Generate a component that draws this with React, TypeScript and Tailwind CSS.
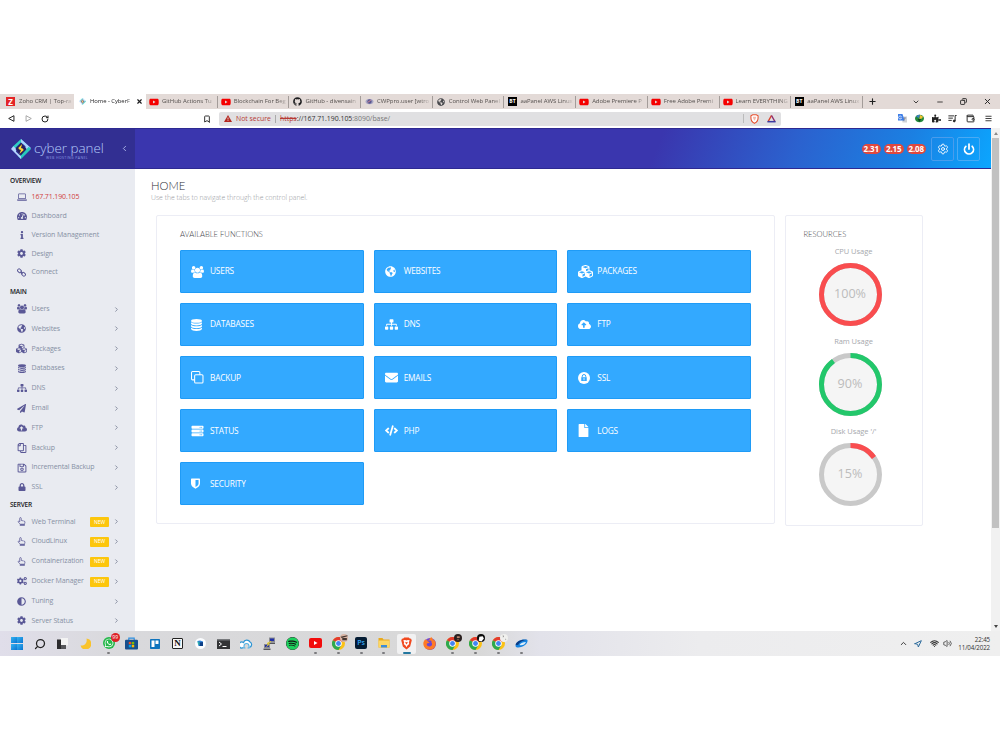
import type { ReactNode } from 'react';
import type { IconType } from 'react-icons';
import {
  FaAdjust,
  FaBars,
  FaCloudUploadAlt,
  FaCode,
  FaCog,
  FaCogs,
  FaCubes,
  FaEnvelope,
  FaFile,
  FaFirefoxBrowser,
  FaGithub,
  FaGlobeAmericas,
  FaInfo,
  FaLock,
  FaPaperPlane,
  FaPuzzlePiece,
  FaRegCopy,
  FaRegSave,
  FaServer,
  FaSitemap,
  FaSpotify,
  FaTachometerAlt,
  FaWhatsapp,
  FaYoutube,
} from 'react-icons/fa';
import {
  Bookmark,
  ChevronDown,
  ChevronLeft,
  ChevronRight,
  ChevronUp,
  Copy,
  Minus,
  Navigation,
  Plus,
  Power,
  RotateCw,
  Search,
  Settings,
  Volume2,
  Wallet,
  Wifi,
  X,
} from 'lucide-react';

type IconProps = { className?: string };

function UsersIcon({ className }: IconProps) {
  return (
    <svg viewBox="0 0 1920 1792" fill="currentColor" className={className}>
      <path d="M593 896q-162 5-265 128h-134q-82 0-138-40.5t-56-118.5q0-353 124-353 6 0 43.5 21t97.5 42.5 119 21.5q67 0 133-23-5 37-5 66 0 139 81 256zm1071 637q0 120-73 189.5t-194 69.5h-874q-121 0-194-69.5t-73-189.5q0-53 3.5-103.5t14-109 26.5-108.5 43-97.5 62-81 85.5-53.5 111.5-20q10 0 43 21.5t73 48 107 48 135 21.5 135-21.5 107-48 73-48 43-21.5q61 0 111.5 20t85.5 53.5 62 81 43 97.5 26.5 108.5 14 109 3.5 103.5zm-1024-1277q0 106-75 181t-181 75-181-75-75-181 75-181 181-75 181 75 75 181zm704 384q0 159-112.5 271.5t-271.5 112.5-271.5-112.5-112.5-271.5 112.5-271.5 271.5-112.5 271.5 112.5 112.5 271.5zm576 225q0 78-56 118.5t-138 40.5h-134q-103-123-265-128 81-117 81-256 0-29-5-66 66 23 133 23 59 0 119-21.5t97.5-42.5 43.5-21q124 0 124 353zm-128-609q0 106-75 181t-181 75-181-75-75-181 75-181 181-75 181 75 75 181z" />
    </svg>
  );
}

function LaptopIcon({ className }: IconProps) {
  return (
    <svg viewBox="0 0 20 16" fill="currentColor" className={className}>
      <path d="M4 1h12a1.5 1.5 0 0 1 1.5 1.5V12h-15V2.5A1.5 1.5 0 0 1 4 1zm0 1.5v8h12v-8z" fillRule="evenodd" />
      <path d="M0 13h20v1.5l-1.5 1H1.5L0 14.5z" />
    </svg>
  );
}

function ChainIcon({ className }: IconProps) {
  return (
    <svg viewBox="0 0 20 20" fill="none" stroke="currentColor" strokeWidth="2.2" className={className}>
      <rect x="1" y="3" width="9" height="6.5" rx="2.8" transform="rotate(45 5.5 6.25)" />
      <rect x="10" y="10.5" width="9" height="6.5" rx="2.8" transform="rotate(45 14.5 13.75)" />
      <path d="M8 8l4.5 4.5" />
    </svg>
  );
}

function DatabaseIcon({ className }: IconProps) {
  return (
    <svg viewBox="0 0 20 22" fill="currentColor" className={className}>
      <ellipse cx="10" cy="3.5" rx="10" ry="3.5" />
      <path d="M0 6c3 3 17 3 20 0v2.8c-1 4-19 4-20 0z" />
      <path d="M0 11c3 3 17 3 20 0v2.8c-1 4-19 4-20 0z" />
      <path d="M0 16c3 3 17 3 20 0v2.5c-1 4.5-19 4.5-20 0z" />
    </svg>
  );
}

function HandIcon({ className }: IconProps) {
  return (
    <svg viewBox="0 0 18 20" fill="none" stroke="currentColor" strokeWidth="1.7" strokeLinejoin="round" className={className}>
      <path d="M5 11V3a1.7 1.7 0 0 1 3.4 0v5c1-1 2.6-.6 3 .6 1-.8 2.3-.3 2.7.8 1.3-.5 2.6.2 2.6 1.8 0 3-1.2 3.8-1.2 5H6.500C5.500 14 1.500 12.500 1.500 10.500 1.500 9 3.500 8.500 5 11z" />
      <path d="M6 16.500h9.500V19H6z" />
    </svg>
  );
}

function CloneIcon({ className }: IconProps) {
  return (
    <svg viewBox="0 0 24 24" fill="none" stroke="currentColor" strokeWidth="2" className={className}>
      <rect x="7" y="7" width="16" height="16" rx="2" />
      <path d="M7 17H3a2 2 0 0 1-2-2V3a2 2 0 0 1 2-2h12a2 2 0 0 1 2 2v4" />
    </svg>
  );
}

function ShieldIcon({ className }: IconProps) {
  return (
    <svg viewBox="0 0 20 24" fill="currentColor" className={className}>
      <path
        d="M1.500 1h17A1.500 1.500 0 0 1 20 2.500V12c0 5-4 8.500-10 11.500C4 20.500 0 17 0 12V2.500A1.500 1.500 0 0 1 1.500 1zM10 4v16c4-2.200 6.800-4.800 6.800-8V4z"
        fillRule="evenodd"
      />
    </svg>
  );
}

function LockCircleIcon({ className }: IconProps) {
  return (
    <svg viewBox="0 0 24 24" className={className}>
      <circle cx="12" cy="12" r="12" fill="currentColor" />
      <path d="M8.500 11V8.500a3.500 3.500 0 0 1 7 0V11" fill="none" stroke="#33a9ff" strokeWidth="2" />
      <path d="M6.500 10.500h11v7.500h-11z" fill="#33a9ff" />
      <path d="M12 12v4.500" stroke="currentColor" strokeWidth="1.6" />
    </svg>
  );
}

function LogoMark({ className }: IconProps) {
  return (
    <svg viewBox="0 0 36 36" className={className}>
      <path d="M18 0 27 9 22 9 18 6 7 17 3 14z" fill="#2fd0c4" />
      <path d="M18 0 36 16 30 22 26 18 26 13 18 6z" fill="#a9d4ff" />
      <path d="M36 18 18 36 12 30 17 30 29 17 32 14z" fill="#27c9bb" />
      <path d="M0 18 4 13 10 18 9 23 18 31 18 36z" fill="#b4d6ff" />
      <path d="M18 7 28 18 18 29 8 18z" fill="#24215f" />
      <path d="M20 9 13 16 15 19 18 20 15 27 23 20 21 17 18 16z" fill="#ffd332" />
    </svg>
  );
}

function ChromeIcon({ className }: IconProps) {
  return (
    <svg viewBox="0 0 24 24" className={className}>
      <circle cx="12" cy="12" r="12" fill="#fbc116" />
      <path d="M12 12 1.6 6A12 12 0 0 1 22.4 6z" fill="#e33b2e" />
      <path d="M1.6 6A12 12 0 0 0 12 24l5.2-9L12 12z" fill="#2da94f" />
      <circle cx="12" cy="12" r="6" fill="#fff" />
      <circle cx="12" cy="12" r="4.5" fill="#4285f4" />
    </svg>
  );
}

function BraveIcon({ className }: IconProps) {
  return (
    <svg viewBox="0 0 24 28" className={className}>
      <path d="M7 1h10l2 2 3 .5 1.500 4-1 3-2.500 10L12 27l-8-6.500L1.500 10.500.500 7.500l1.500-4L5 3z" fill="#f1491f" />
      <path d="M5 7l4-.5 3 1 3-1 4 .5-2 5 1 3-4 3.500-2 3.500-2-3.500L6 15l1-3z" fill="#fff" />
      <path d="M9 10l3 1.500 3-1.500-1.500 4L12 16l-1.500-2z" fill="#f1491f" />
    </svg>
  );
}

type Tab = { title: string; icon: ReactNode };

const btIcon = (
  <span className="flex h-[9px] w-[9px] items-center justify-center bg-black text-[5px] font-bold text-white">BT</span>
);
const ytIcon = <FaYoutube className="h-[10px] w-[10px] text-[#f50000]" />;

const tabs: Tab[] = [
  { title: 'GitHub Actions Tu', icon: ytIcon },
  { title: 'Blockchain For Beg', icon: ytIcon },
  { title: 'GitHub - divensain', icon: <FaGithub className="h-[9px] w-[9px] text-[#1d1d1f]" /> },
  {
    title: 'CWPpro.user [wtro',
    icon: (
      <svg viewBox="0 0 20 16" className="h-[7px] w-[9px]">
        <ellipse cx="10" cy="8" rx="9" ry="6" fill="#a8a6c4" />
        <circle cx="10" cy="8" r="5" fill="#5a568f" />
        <path d="M6 10l7-5" stroke="#d98a9a" strokeWidth="2" />
      </svg>
    ),
  },
  { title: 'Control Web Panel', icon: <FaGlobeAmericas className="h-[8px] w-[8px] text-[#48494d]" /> },
  { title: 'aaPanel AWS Linux', icon: btIcon },
  { title: 'Adobe Premiere P', icon: ytIcon },
  { title: 'Free Adobe Premi', icon: ytIcon },
  { title: 'Learn EVERYTHING', icon: ytIcon },
  { title: 'aaPanel AWS Linux', icon: btIcon },
];

function TabStrip() {
  return (
    <div className="flex h-[15px] items-center bg-[#e3dad7] text-[6px] tracking-[-0.05px] text-[#55504e]">
      <div className="flex h-full w-[74px] shrink-0 items-center gap-[4px] pl-[6px]">
        <span className="flex h-[9px] w-[9px] shrink-0 items-center justify-center bg-[#e42527] text-[8px] leading-none font-bold text-white">Z</span>
        <span className="w-[54px] whitespace-nowrap mask-r-from-80%">Zoho CRM | Top-ra</span>
      </div>
      <div className="flex h-full w-[72px] shrink-0 items-center bg-white pl-[5px] text-[#1d1d1f]">
        <LogoMark className="h-[7px] w-[7px] opacity-70" />
        <span className="ml-[4px] w-[43px] text-[5.9px] font-medium whitespace-nowrap mask-r-from-85%">Home - CyberF</span>
        <X className="ml-[3px] h-[7px] w-[7px]" strokeWidth={4} />
      </div>
      {tabs.map((tab, i) => (
        <div key={i} className="flex h-full w-[71.7px] shrink-0 items-center">
          <span className="flex w-[16px] shrink-0 justify-center">{tab.icon}</span>
          <span className="w-[54px] whitespace-nowrap mask-r-from-80%">{tab.title}</span>
          <span className="ml-auto h-[12px] w-px bg-[#a39c99]" />
        </div>
      ))}
      <Plus className="ml-[5px] h-[9px] w-[9px] shrink-0 text-[#222]" strokeWidth={3} />
      <div className="ml-auto flex items-center pr-[8px] text-[#222]">
        <ChevronDown className="h-[8px] w-[8px]" strokeWidth={2.5} />
        <Minus className="ml-[16px] h-[8px] w-[8px]" strokeWidth={2.5} />
        <Copy className="ml-[16px] h-[7px] w-[7px] -scale-x-100" strokeWidth={3} />
        <X className="ml-[16px] h-[9px] w-[9px]" strokeWidth={2.5} />
      </div>
    </div>
  );
}

function AddressBar() {
  return (
    <div className="flex h-[19px] items-center bg-white text-[#333]">
      <svg viewBox="0 0 10 10" className="ml-[8px] h-[7px] w-[7px]">
        <path d="M8.500 1v8L1 5z" fill="none" stroke="#222" strokeWidth="1.4" strokeLinejoin="round" />
      </svg>
      <svg viewBox="0 0 10 10" className="ml-[10px] h-[7px] w-[7px]">
        <path d="M1.500 1v8L9 5z" fill="none" stroke="#999" strokeWidth="1.2" strokeLinejoin="round" />
      </svg>
      <RotateCw className="ml-[9px] h-[8px] w-[8px] text-[#222]" strokeWidth={3} />
      <Bookmark className="ml-[154px] h-[8px] w-[8px]" strokeWidth={3} />
      <div className="ml-[8px] flex h-[14px] w-[562px] items-center rounded-[2px] bg-[#e0e0e2] pl-[5px] text-[6.9px]">
        <svg viewBox="0 0 16 14" className="h-[7px] w-[8px]">
          <path d="M8 0l8 14H0z" fill="#b3261e" />
          <path d="M8 5v4M8 10.500v1.500" stroke="#fff" strokeWidth="1.5" />
        </svg>
        <span className="mt-[1px] ml-[4px] w-[36px] whitespace-nowrap text-[#b73a35]">Not secure</span>
        <span className="ml-[3px] h-[8px] w-px bg-[#aaa]" />
        <span className="mt-[1px] ml-[4px] whitespace-nowrap">
          <span className="text-[#b73a35] line-through">https</span>://167.71.190.105<span className="text-[#777]">:8090/base/</span>
        </span>
        <span className="ml-auto h-[9px] w-px bg-[#bbb]" />
        <svg viewBox="0 0 24 28" className="ml-[6px] h-[10px] w-[9px]">
          <path d="M7 2h10l5 3v6c0 7-4 12-10 15C6 23 2 18 2 11V5z" fill="#fff" stroke="#e8502f" strokeWidth="3" />
          <path d="M7 8h10l-2 6-3 5-3-5z" fill="#f3b9ac" />
        </svg>
        <svg viewBox="0 0 24 22" className="mr-[5px] ml-[8px] h-[9px] w-[9px]">
          <path d="M12 3 3 19" stroke="#d8402a" strokeWidth="4" />
          <path d="M12 3l9 16" stroke="#8e2c6c" strokeWidth="4" />
          <path d="M1 19.500h22" stroke="#3b3aa0" strokeWidth="4" />
        </svg>
      </div>
      <div className="ml-auto flex items-center pr-[8px] text-[#222]">
        <svg viewBox="0 0 18 18" className="h-[9px] w-[9px]">
          <path d="M7 5h11v12H9z" fill="#cfd2d6" />
          <path d="M0 0h9l4 13H0z" fill="#3f7fe8" />
          <path d="M7 6a3 3 0 1 0 0 2H5" stroke="#fff" strokeWidth="1.4" fill="none" />
          <path d="M11 8h5M13.500 7v1c0 3-2 5-3 6" stroke="#667" strokeWidth="1" fill="none" />
        </svg>
        <svg viewBox="0 0 18 18" className="ml-[8px] h-[9px] w-[9px]">
          <ellipse cx="9" cy="9" rx="9" ry="7.5" fill="#23883c" />
          <path d="M2 5a8 8 0 0 1 8-3.500L8 8z" fill="#3c7fc4" />
          <path d="M10 2l6 3-2 4-5 1z" fill="#f1c232" />
          <path d="M5 10h7l-3 6z" fill="#0b4a1f" />
        </svg>
        <FaPuzzlePiece className="ml-[8px] h-[9px] w-[9px]" />
        <svg viewBox="0 0 24 24" fill="none" stroke="currentColor" strokeWidth="2.5" className="ml-[7px] h-[9px] w-[9px]">
          <path d="M1 5h15M1 11h12M1 17h9M19 19V4h4" />
          <circle cx="16.500" cy="18.500" r="2.5" fill="currentColor" />
        </svg>
        <Wallet className="ml-[9px] h-[9px] w-[9px]" strokeWidth={2.5} />
        <FaBars className="ml-[10px] h-[7px] w-[7px] text-[#444]" />
      </div>
    </div>
  );
}

function Header() {
  return (
    <header className="flex h-[41px] items-center border-t border-b border-[#2d2992] bg-[linear-gradient(112deg,#3a36ae_0%,#3a36ae_66%,#2b62cf_80%,#1b80e2_91%,#0ba6ff_100%)]">
      <div className="flex h-full w-[135px] shrink-0 items-center bg-[#322f92]">
        <LogoMark className="ml-[11px] h-[20px] w-[20px]" />
        <div className="ml-[3px] flex w-[70px] flex-col pt-[4px]">
          <span className="text-[13.4px] leading-[14px] font-light whitespace-nowrap text-[#b5cdfb]">cyber panel</span>
          <span className="mt-[1.5px] ml-[12px] text-[3.5px] leading-[4px] tracking-[0.4px] whitespace-nowrap text-[#8d9be0]">WEB HOSTING PANEL</span>
        </div>
        <ChevronLeft className="ml-[15.5px] h-[9px] w-[9px] text-[#c5d0f8]" />
      </div>
      <div className="ml-auto flex items-center pr-[11px]">
        {['2.31', '2.15', '2.08'].map((load) => (
          <span
            key={load}
            className="mr-[3px] flex h-[10px] w-[19.5px] items-center justify-center rounded-full bg-[#e0483e] text-[8px] leading-none font-bold tracking-[-0.1px] text-white"
          >
            {load}
          </span>
        ))}
        <button className="ml-[2px] flex h-[24px] w-[23px] items-center justify-center rounded-[2px] border border-[#4a9cec] text-white">
          <Settings className="h-[12px] w-[12px]" strokeWidth={1.8} />
        </button>
        <button className="ml-[3px] flex h-[24px] w-[23px] items-center justify-center rounded-[2px] border border-[#4aaaf4] text-white">
          <Power className="h-[12px] w-[12px]" strokeWidth={3.5} />
        </button>
      </div>
    </header>
  );
}

type NavItem = { label: string; icon: IconType | typeof UsersIcon; size?: string; isNew?: boolean; active?: boolean };

const overview: NavItem[] = [
  { label: '167.71.190.105', icon: LaptopIcon, size: 'h-[8px] w-[10px]', active: true },
  { label: 'Dashboard', icon: FaTachometerAlt, size: 'h-[10px] w-[10px]' },
  { label: 'Version Management', icon: FaInfo, size: 'h-[8px] w-[8px]' },
  { label: 'Design', icon: FaCog },
  { label: 'Connect', icon: ChainIcon },
];

const mainItems: NavItem[] = [
  { label: 'Users', icon: UsersIcon, size: 'h-[9.5px] w-[10px]' },
  { label: 'Websites', icon: FaGlobeAmericas },
  { label: 'Packages', icon: FaCubes, size: 'h-[11px] w-[11px]' },
  { label: 'Databases', icon: DatabaseIcon, size: 'h-[9.5px] w-[8px]' },
  { label: 'DNS', icon: FaSitemap, size: 'h-[10px] w-[10px]' },
  { label: 'Email', icon: FaPaperPlane },
  { label: 'FTP', icon: FaCloudUploadAlt, size: 'h-[10px] w-[10px]' },
  { label: 'Backup', icon: FaRegCopy, size: 'h-[10px] w-[10px] -scale-x-100' },
  { label: 'Incremental Backup', icon: FaRegSave, size: 'h-[10px] w-[10px]' },
  { label: 'SSL', icon: FaLock, size: 'h-[8px] w-[8px]' },
];

const serverItems: NavItem[] = [
  { label: 'Web Terminal', icon: HandIcon, isNew: true },
  { label: 'CloudLinux', icon: HandIcon, isNew: true },
  { label: 'Containerization', icon: HandIcon, isNew: true },
  { label: 'Docker Manager', icon: FaCogs, size: 'h-[10px] w-[10px]', isNew: true },
  { label: 'Tuning', icon: FaAdjust },
  { label: 'Server Status', icon: FaCog },
];

function NavRow({ item, expandable }: { item: NavItem; expandable?: boolean }) {
  const Icon = item.icon;
  return (
    <li className={expandable ? 'flex h-[19.8px] items-center' : 'flex h-[18.8px] items-center'}>
      <span className="ml-[14px] flex w-[15px] shrink-0 justify-center text-[#5a5896]">
        <Icon className={item.size ?? 'h-[9px] w-[9px]'} />
      </span>
      <span
        className={
          item.active
            ? 'ml-[2.5px] w-[58px] text-[7px] tracking-[-0.12px] whitespace-nowrap text-[#d03c3c]'
            : 'ml-[2.5px] w-[58px] text-[7px] tracking-[-0.12px] whitespace-nowrap text-[#8690a4]'
        }
      >
        {item.label}
      </span>
      <span className="flex w-[20px] justify-center">
        {item.isNew && (
          <span className="mt-[1px] flex h-[10px] w-[19px] items-center justify-center rounded-[1px] bg-[#fcc60d] text-[5px] font-medium text-white">
            NEW
          </span>
        )}
      </span>
      {expandable && <ChevronRight className="ml-[3.5px] h-[7px] w-[7px] text-[#6a7288]" strokeWidth={2.5} />}
    </li>
  );
}

function Sidebar() {
  return (
    <aside className="h-full w-[135px] shrink-0 overflow-hidden bg-[#e9ebf1] text-[6.5px]">
      <h6 className="pt-[5.5px] pb-[1.5px] pl-[10px] leading-[12px] font-semibold tracking-[-0.2px] text-[#16161a]">OVERVIEW</h6>
      <ul>
        {overview.map((item) => (
          <NavRow key={item.label} item={item} />
        ))}
      </ul>
      <h6 className="h-[17.3px] pl-[10px] leading-[20px] font-semibold tracking-[-0.2px] text-[#16161a]">MAIN</h6>
      <ul>
        {mainItems.map((item) => (
          <NavRow key={item.label} item={item} expandable />
        ))}
      </ul>
      <h6 className="h-[14.8px] pl-[10px] leading-[16px] font-semibold tracking-[-0.2px] text-[#16161a]">SERVER</h6>
      <ul>
        {serverItems.map((item) => (
          <NavRow key={item.label} item={item} expandable />
        ))}
      </ul>
    </aside>
  );
}

const functions = [
  { label: 'USERS', icon: UsersIcon, size: 'h-[12px] w-[13px]' },
  { label: 'WEBSITES', icon: FaGlobeAmericas, size: 'h-[11px] w-[11px]' },
  { label: 'PACKAGES', icon: FaCubes, size: 'h-[15px] w-[15px]' },
  { label: 'DATABASES', icon: DatabaseIcon, size: 'h-[12px] w-[11px]' },
  { label: 'DNS', icon: FaSitemap, size: 'h-[13px] w-[13px]' },
  { label: 'FTP', icon: FaCloudUploadAlt, size: 'h-[13px] w-[13px]' },
  { label: 'BACKUP', icon: CloneIcon, size: 'h-[12.5px] w-[12.5px]' },
  { label: 'EMAILS', icon: FaEnvelope, size: 'h-[13px] w-[13px]' },
  { label: 'SSL', icon: LockCircleIcon, size: 'h-[12px] w-[12px]' },
  { label: 'STATUS', icon: FaServer, size: 'h-[12px] w-[13px]' },
  { label: 'PHP', icon: FaCode, size: 'h-[13px] w-[13px]' },
  { label: 'LOGS', icon: FaFile, size: 'h-[13px] w-[11px]' },
  { label: 'SECURITY', icon: ShieldIcon, size: 'h-[11px] w-[9px]' },
];

function FunctionsPanel() {
  return (
    <section className="h-[309px] w-[618.5px] shrink-0 rounded-[2px] border border-[#ecedf5] bg-white pt-[13px] pl-[23px]">
      <h3 className="font-['Lato'] text-[7.6px] leading-[11px] font-light text-[#44454b]">AVAILABLE FUNCTIONS</h3>
      <div className="mt-[10px] grid w-[571px] grid-cols-3 gap-[10px]">
        {functions.map(({ label, icon: Icon, size }) => (
          <a
            key={label}
            className="flex h-[43.1px] items-center rounded-[1px] border border-[#1f9bf6] bg-[#33a9ff] pl-[10px] text-white"
          >
            <span className="flex w-[15px] shrink-0">
              <Icon className={size} />
            </span>
            <span className="ml-[4px] text-[8.3px] font-medium tracking-[-0.18px]">{label}</span>
          </a>
        ))}
      </div>
    </section>
  );
}

const resources = [
  { label: 'CPU Usage', value: 100, color: '#f94d4f' },
  { label: 'Ram Usage', value: 90, color: '#23c76b' },
  { label: "Disk Usage '/'", value: 15, color: '#f94d4f' },
];

function UsageRing({ value, color }: { value: number; color: string }) {
  return (
    <div className="grid h-[63px] w-[63px] place-items-center">
      <svg viewBox="0 0 63 63" className="col-start-1 row-start-1 h-[63px] w-[63px] -rotate-90">
        <circle cx="31.5" cy="31.5" r="29" fill="#f5f5f5" stroke="#c9c9c9" strokeWidth="5" />
        <circle
          cx="31.5"
          cy="31.5"
          r="29"
          fill="none"
          stroke={color}
          strokeWidth="5"
          pathLength={100}
          strokeDasharray={`${value} ${100 - value}`}
        />
      </svg>
      <span className="z-10 col-start-1 row-start-1 text-[12.6px] leading-none text-[#bcbcbc]">{value}%</span>
    </div>
  );
}

function ResourcesPanel() {
  return (
    <section className="h-[311px] w-[138px] shrink-0 rounded-[2px] border border-[#ecedf5] bg-white pt-[13px]">
      <h3 className="pl-[18px] font-['Lato'] text-[7.6px] leading-[11px] font-light text-[#44454b]">RESOURCES</h3>
      {resources.map((r) => (
        <div key={r.label} className="flex h-[89.8px] w-[129px] flex-col items-center">
          <span className="mt-[5px] ml-[7px] text-[7.5px] leading-[13px] tracking-[-0.05px] text-[#a6a8ad]">{r.label}</span>
          <div className="mt-[5px]">
            <UsageRing value={r.value} color={r.color} />
          </div>
        </div>
      ))}
    </section>
  );
}

type TaskItem = { icon: ReactNode; running?: boolean; active?: boolean };

function ChromeProfile({ avatar }: { avatar: ReactNode }) {
  return (
    <span className="relative flex">
      <ChromeIcon className="h-[13px] w-[13px]" />
      <span className="absolute -top-[3px] -right-[3px]">{avatar}</span>
    </span>
  );
}

const taskItems: TaskItem[] = [
  {
    icon: (
      <span className="grid grid-cols-2 gap-[0.5px]">
        {[0, 1, 2, 3].map((n) => (
          <span key={n} className="h-[6px] w-[6px] bg-[linear-gradient(135deg,#35b3f1,#0b74d1)]" />
        ))}
      </span>
    ),
  },
  { icon: <Search className="h-[12px] w-[12px] -scale-x-100 text-[#222]" strokeWidth={2.5} /> },
  {
    icon: (
      <svg viewBox="0 0 22 22" className="h-[11px] w-[11px]">
        <path d="M7 0h15v15H7z" fill="#f3f3f3" />
        <path d="M0 3h8v11h10v8H0z" fill="#2c2c2e" />
        <path d="M8 14h10v8H8z" fill="#56565a" />
      </svg>
    ),
  },
  {
    icon: (
      <svg viewBox="0 0 22 22" className="h-[11px] w-[11px]">
        <path d="M13 1A11 11 0 1 1 1 15C9 16 15 10 13 1z" fill="#f9c32c" />
      </svg>
    ),
  },
  {
    icon: (
      <span className="relative flex h-[12px] w-[12px] items-center justify-center rounded-full bg-[#25b84a]">
        <FaWhatsapp className="h-[10px] w-[10px] text-white" />
        <span className="absolute -top-[4px] -right-[5px] flex h-[9px] w-[9px] items-center justify-center rounded-full bg-[#dd2025] text-[5px] text-white">
          99
        </span>
      </span>
    ),
    running: true,
  },
  {
    icon: (
      <svg viewBox="0 0 24 24" className="h-[13px] w-[13px]">
        <path d="M7 6V2h10v4" fill="none" stroke="#2a8de0" strokeWidth="2" />
        <rect y="5" width="24" height="18" rx="2" fill="#174f8c" />
        <path d="M7 9h4.500v4.500H7z" fill="#f25022" />
        <path d="M12.500 9H17v4.500h-4.500z" fill="#7fba00" />
        <path d="M7 14.500h4.500V19H7z" fill="#00a4ef" />
        <path d="M12.500 14.500H17V19h-4.500z" fill="#ffb900" />
      </svg>
    ),
  },
  {
    icon: (
      <svg viewBox="0 0 20 20" className="h-[10px] w-[10px]">
        <rect width="20" height="20" rx="1.5" fill="#0f74bd" />
        <path d="M3 3h6v13H3zM11 3h6v7h-6z" fill="#fff" />
      </svg>
    ),
  },
  {
    icon: (
      <span className="flex h-[11px] w-[11px] items-center justify-center rounded-[1px] border border-[#222] bg-[#f7f7f7] font-['Liberation_Serif'] text-[9px] leading-none font-bold text-[#111]">
        N
      </span>
    ),
  },
  {
    icon: (
      <svg viewBox="0 0 22 22" className="h-[11px] w-[11px]">
        <circle cx="11" cy="11" r="11" fill="#fbfdff" />
        <path d="M5 6l5-1 6 2v9H7z" fill="#2b80d8" />
        <path d="M9 9l7-1v8H9z" fill="#0d3f86" />
        <path d="M5 6l4 3v6l-3-3z" fill="#2fb3a6" />
      </svg>
    ),
  },
  {
    icon: (
      <svg viewBox="0 0 26 20" className="h-[10px] w-[13px]">
        <path d="M0 0h26v20H0z" fill="#333436" />
        <path d="M0 0h26v3H0z" fill="#77797c" />
        <path d="M4 6l5 4-5 4M11 15h8" stroke="#fff" strokeWidth="2" fill="none" />
      </svg>
    ),
  },
  {
    icon: (
      <svg viewBox="0 0 26 22" className="h-[11px] w-[13px]" fill="none">
        <path d="M7 19a6 6 0 1 1 0-10A7 7 0 0 1 20 8a6 6 0 0 1-1 11" fill="#fff" stroke="#2d95d3" strokeWidth="2.5" />
        <path d="M8 20v-4a5 5 0 0 1 10 0v4z" fill="#d8d8d8" stroke="#54b2e4" strokeWidth="2.2" />
        <path d="M11 22v-5a2 2 0 0 1 4 0v5z" fill="#d8d8d8" />
      </svg>
    ),
  },
  {
    icon: (
      <svg viewBox="0 0 26 26" className="h-[13px] w-[13px]">
        <path d="M12 1h12v9H12zM2 14h12v8H2z" fill="#8a8b91" />
        <path d="M14 3h8v5h-8zM4 16h8v4H4z" fill="#1f2fa8" />
        <path d="M11 11h13v3H11zM1 23h14v3H1z" fill="#55565b" />
        <path d="M16 9l-8 4 5 1-6 5" stroke="#e8cf30" strokeWidth="2" fill="none" />
      </svg>
    ),
  },
  { icon: <FaSpotify className="h-[13px] w-[13px] rounded-full bg-[#111] text-[#1ed05e]" /> },
  {
    icon: (
      <svg viewBox="0 0 26 20" className="h-[10px] w-[13px]">
        <rect width="26" height="20" rx="4" fill="#f20c0c" />
        <path d="M10 6l7 4-7 4z" fill="#fff" />
      </svg>
    ),
    running: true,
  },
  {
    icon: (
      <ChromeProfile
        avatar={
          <svg viewBox="0 0 14 14" className="h-[8px] w-[8px]">
            <circle cx="7" cy="7" r="7" fill="#d9b5a5" />
            <path d="M1 5l12-3v2L3 7zM4 7h8v4H4z" fill="#43352f" />
          </svg>
        }
      />
    ),
    running: true,
  },
  {
    icon: (
      <span className="flex h-[12px] w-[12px] items-center justify-center rounded-[2px] bg-[#041c33] text-[7px] font-semibold text-[#35a6f5]">Ps</span>
    ),
    running: true,
  },
  {
    icon: (
      <svg viewBox="0 0 24 20" className="h-[10px] w-[12px]">
        <path d="M1 0h8l2 3h12v16H1z" fill="#e9aa1d" />
        <path d="M1 5h22v14H1z" fill="#fcd765" />
        <path d="M6 14h12v5H6z" fill="#3d8cd7" />
      </svg>
    ),
    running: true,
  },
  { icon: <BraveIcon className="h-[13px] w-[11px]" />, active: true },
  {
    icon: (
      <span className="flex h-[12px] w-[12px] items-center justify-center rounded-full bg-[#6d45d3]">
        <FaFirefoxBrowser className="h-[13px] w-[13px] shrink-0 text-[#ff7a26]" />
      </span>
    ),
  },
  {
    icon: (
      <ChromeProfile
        avatar={
          <svg viewBox="0 0 14 14" className="h-[8px] w-[8px]">
            <circle cx="7" cy="7" r="7" fill="#291f1e" />
            <path d="M5 4h5v3H5z" fill="#b98670" />
            <path d="M4 11l3-3 3 3z" fill="#75574a" />
          </svg>
        }
      />
    ),
    running: true,
  },
  {
    icon: (
      <ChromeProfile
        avatar={
          <svg viewBox="0 0 14 14" className="h-[8px] w-[8px]">
            <circle cx="7" cy="7" r="7" fill="#0a0a0a" />
            <path d="M4 5l6-1 2 4-4 5-5-1z" fill="#fff" />
          </svg>
        }
      />
    ),
    running: true,
  },
  {
    icon: (
      <ChromeProfile
        avatar={
          <svg viewBox="0 0 14 14" className="h-[8px] w-[8px]">
            <circle cx="7" cy="7" r="7" fill="#f0f0ee" />
            <path d="M5 1l2 4-2 1zM9 8l2 1-1 2z" fill="#8c8a88" />
          </svg>
        }
      />
    ),
    running: true,
  },
  {
    icon: (
      <svg viewBox="0 0 26 22" className="h-[11px] w-[13px]">
        <path d="M1 15C3 6 14 1 25 4c1 8-8 14-19 15-3 0-5-1-5-4z" fill="#1583e0" />
        <path d="M1 13c3-7 13-11 24-9-8 0-16 4-18 9-2 1-4 2-6 0z" fill="#0b3c85" />
        <path d="M9 14c2-4 7-6 13-6-2 5-8 8-13 6z" fill="#dceefa" />
      </svg>
    ),
    running: true,
  },
];

function Taskbar() {
  return (
    <footer className="flex h-[25px] items-center bg-[linear-gradient(90deg,#e0deea_0%,#d9d9dc_12%,#d8d8d8_48%,#e2e2ea_54%,#ececee_70%,#efefef_100%)] pl-[5.5px]">
      {taskItems.map((task, i) => (
        <div key={i} className="flex h-full w-[22.95px] shrink-0 items-center justify-center">
          <div
            className={
              task.active
                ? 'flex h-[20px] w-[19px] flex-col items-center rounded-[2px] bg-[#f1f1f2]'
                : 'flex h-[20px] w-[19px] flex-col items-center'
            }
          >
            <span className="mt-[3px] flex h-[14px] items-center">{task.icon}</span>
            {task.active && <span className="mt-[1px] h-[2px] w-[8px] rounded-full bg-[#23779f]" />}
            {task.running && <span className="mt-[2px] h-[1.5px] w-[3px] rounded-full bg-[#7b7b7e]" />}
          </div>
        </div>
      ))}
      <div className="ml-auto flex items-center pr-[10px] text-[#333]">
        <ChevronUp className="h-[9px] w-[9px]" strokeWidth={2.5} />
        <Navigation className="ml-[6px] h-[8px] w-[8px] text-[#2c6b9c]" strokeWidth={3} />
        <Wifi className="ml-[8px] h-[9px] w-[9px]" strokeWidth={3} />
        <Volume2 className="ml-[4px] h-[9px] w-[9px]" />
        <div className="mt-[1px] ml-[6px] flex w-[32px] flex-col items-end text-[6.2px] leading-[8.5px] tracking-[-0.12px]">
          <span>22:45</span>
          <span>11/04/2022</span>
        </div>
      </div>
    </footer>
  );
}

export default function App() {
  return (
    <div className="flex h-[750px] w-[1000px] flex-col overflow-hidden bg-white pt-[94px] font-['Open_Sans',sans-serif]">
      <TabStrip />
      <AddressBar />
      <div className="flex h-[503px]">
        <div className="flex w-[991px] flex-col">
          <Header />
          <div className="flex h-[462px]">
            <Sidebar />
            <main className="flex-1 pt-[10px]">
              <h1 className="pl-[16px] font-['Lato'] text-[11.3px] leading-[14px] font-light text-[#2c2e36]">HOME</h1>
              <p className="pl-[16px] text-[6.85px] leading-[9px] font-light text-[#96989e]">
                Use the tabs to navigate through the control panel.
              </p>
              <div className="mt-[13px] ml-[21px] flex gap-[10px]">
                <FunctionsPanel />
                <ResourcesPanel />
              </div>
            </main>
          </div>
        </div>
        <div className="flex w-[9px] flex-col items-center bg-[#f1f1f1]">
          <span className="mt-[4px] h-0 w-0 border-x-[2px] border-b-[3px] border-x-transparent border-b-[#8a8a8a]" />
          <span className="mt-[3px] h-[390px] w-[7px] bg-[#c1c1c1]" />
          <span className="mt-auto mb-[3px] h-0 w-0 border-x-[2px] border-t-[3px] border-x-transparent border-t-[#444]" />
        </div>
      </div>
      <Taskbar />
    </div>
  );
}
